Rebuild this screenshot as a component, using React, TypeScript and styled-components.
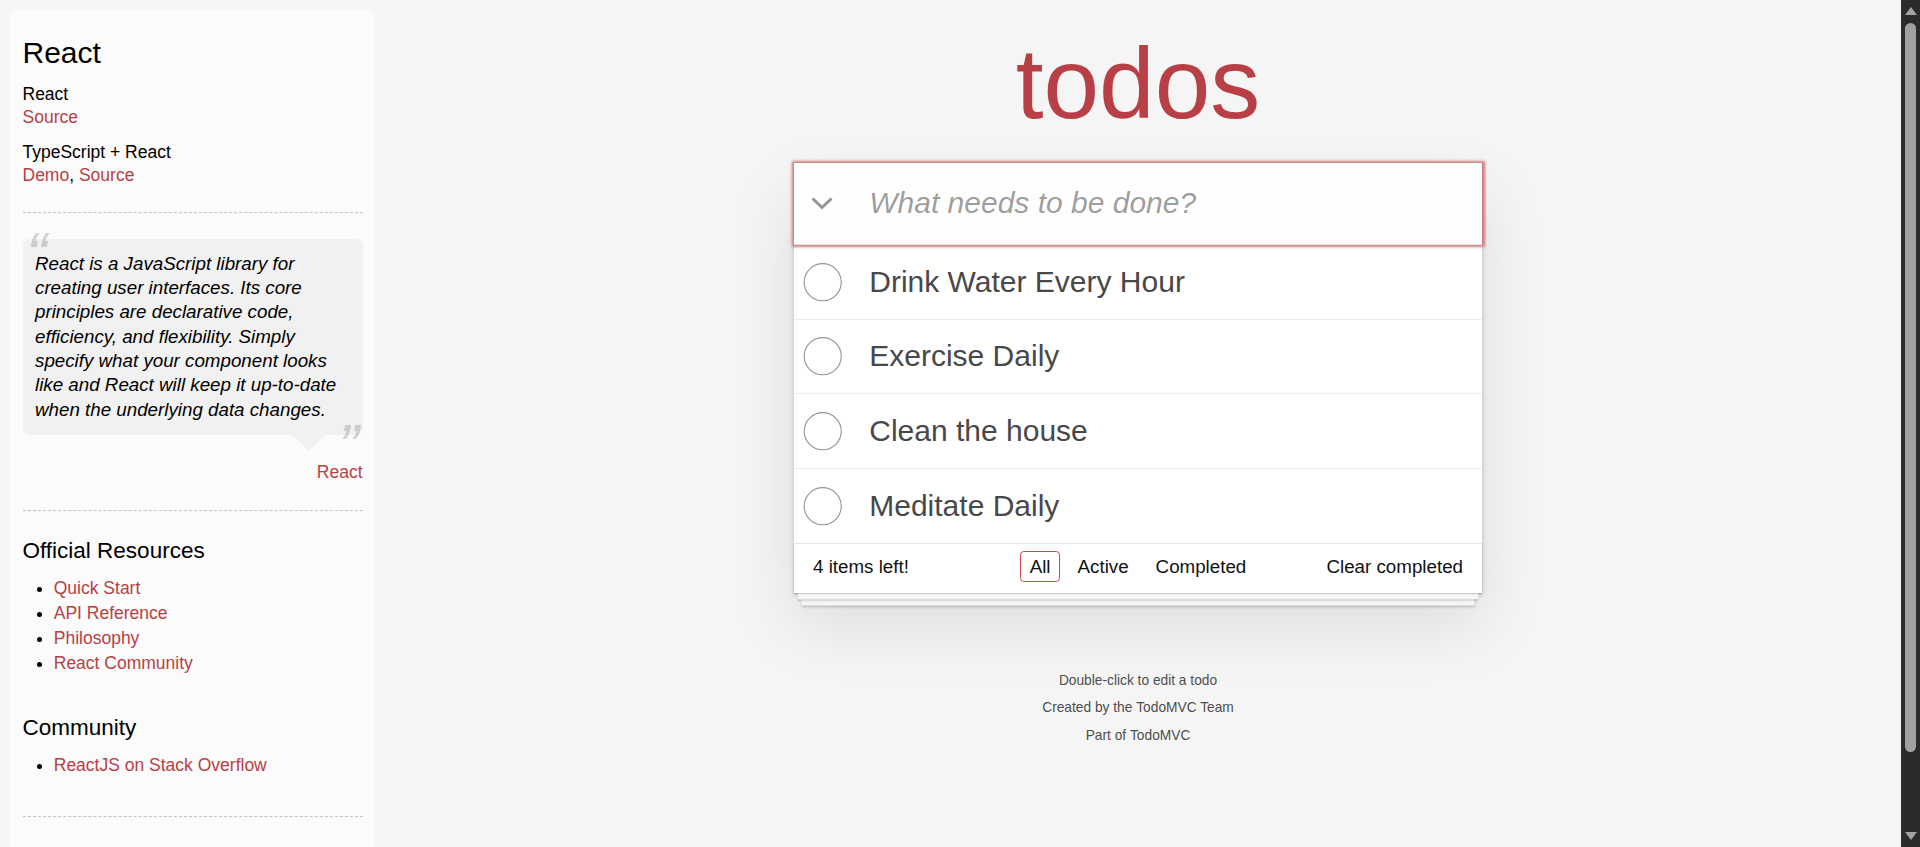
import React from "react";
import styled, { createGlobalStyle } from "styled-components";

const GlobalStyle = createGlobalStyle`
  html { scrollbar-width: none; }
  html::-webkit-scrollbar { display: none; }
  html, body { margin: 0; padding: 0; }
  body {
    background: #f5f5f5;
    color: #111111;
    font-family: "Liberation Sans", Arial, Helvetica, sans-serif;
    font-size: 17.5px;
    line-height: 24.5px;
    font-weight: 300;
  }
`;

const Page = styled.div`
  display: grid;
  grid-template-columns: 375px 1fr;
  align-items: start;
  padding-right: 19px;
`;

/* ---------- Window scrollbar (drawn, the browser hides its own) ---------- */

const ScrollBar = styled.div`
  position: fixed;
  top: 0;
  right: 0;
  bottom: 0;
  width: 19px;
  display: flex;
  flex-direction: column;
  background: #2b2b2b;
  z-index: 10;
`;

const ScrollButton = styled.div<{ $down?: boolean }>`
  flex: none;
  height: 19px;
  display: flex;
  justify-content: center;
  align-items: ${(p) => (p.$down ? "flex-start" : "flex-end")};
  padding: ${(p) => (p.$down ? "4px 0 0" : "0 0 4px")};
  box-sizing: border-box;

  &::before {
    content: "";
    border-left: 6px solid transparent;
    border-right: 6px solid transparent;
    ${(p) => (p.$down ? "border-top: 8px solid #a3a3a3;" : "border-bottom: 8px solid #a3a3a3;")}
  }
`;

const ScrollTrack = styled.div`
  flex: 1;
  padding: 4px 4px 0;
`;

const ScrollThumb = styled.div`
  height: 729px;
  border-radius: 6px;
  background: #a0a0a0;
`;

/* ---------- Learn sidebar ---------- */

const Sidebar = styled.aside`
  box-sizing: border-box;
  width: 365px;
  margin: 10px 0 0 10px;
  padding: 12.5px;
  border-radius: 6.25px;
  background: rgba(255, 255, 255, 0.6);
`;

const SideHeader = styled.header``;

const SideTitle = styled.h3`
  margin: 12.5px 0;
  font-size: 30px;
  line-height: 1.2;
  font-weight: 500;
  color: #000;
`;

const SourceName = styled.h5`
  margin: 12.5px 0 0;
  font-size: 17.5px;
  line-height: 1.2;
  font-weight: 500;
  color: #000;
`;

const LinkLine = styled.div`
  line-height: 24.5px;
  color: #000;
`;

const Link = styled.a`
  color: #b83f45;
  font-weight: normal;
  text-decoration: none;
`;

const Rule = styled.hr`
  margin: 25px 0;
  border: 0;
  border-top: 1px dashed #c5c5c5;
  border-bottom: 1px dashed #f7f7f7;
`;

const Quote = styled.blockquote`
  margin: 25px 0 0;
  padding: 0;
`;

const Bubble = styled.div`
  position: relative;
  padding: 12.5px;
  border-radius: 6.25px;
  background: rgba(0, 0, 0, 0.04);

  &::after {
    content: "";
    position: absolute;
    top: 100%;
    right: 37.5px;
    border: 16.25px solid transparent;
    border-top-color: rgba(0, 0, 0, 0.04);
  }
`;

const QuoteText = styled.p`
  margin: 0;
  font-size: 18.75px;
  line-height: 1.3;
  font-style: italic;
  color: #000;

  &::before {
    content: "\\201C";
    position: absolute;
    top: -25px;
    left: 3.75px;
    font-size: 62.5px;
    opacity: 0.15;
  }

  &::after {
    content: "\\201D";
    position: absolute;
    bottom: -52.5px;
    right: 3.75px;
    font-size: 62.5px;
    opacity: 0.15;
  }
`;

const Attribution = styled.footer`
  margin-top: 25.5px;
  line-height: 24.5px;
  text-align: right;
`;

const ResourceTitle = styled.h4`
  margin: 12.5px 0;
  font-size: 22.5px;
  line-height: 1.2;
  font-weight: 500;
  color: #000;
`;

const ResourceList = styled.ul`
  margin: 0 0 37.5px 31.25px;
  padding: 0;
  color: #000;
`;

const ResourceItem = styled.li`
  line-height: 25px;
`;

const SideFooter = styled.footer``;

const Note = styled.p`
  margin: 0;
  font-style: italic;
  color: #000;
`;

/* ---------- Todo app ---------- */

const Main = styled.main`
  display: flex;
  flex-direction: column;
  align-items: center;
`;

const Column = styled.div`
  width: 687.5px;
`;

const Title = styled.h1`
  margin: 33px 0 29.5px;
  height: 100px;
  font-size: 100px;
  line-height: 100px;
  font-weight: 200;
  text-align: center;
  color: #b83f45;
  text-rendering: optimizeLegibility;
`;

const Card = styled.section`
  background: #fff;
  box-shadow: 0 2.5px 5px 0 rgba(0, 0, 0, 0.2), 0 31.25px 62.5px 0 rgba(0, 0, 0, 0.1);
`;

const NewTodoRow = styled.header`
  display: flex;
  align-items: center;
  height: 81.25px;
  background: rgba(0, 0, 0, 0.003);
  box-shadow: 0 0 2.5px 2.5px #cf7d7d;
`;

const ToggleAll = styled.label`
  display: flex;
  align-items: center;
  justify-content: center;
  width: 56.25px;
  height: 100%;
  flex: none;
`;

const NewTodo = styled.input`
  flex: 1;
  min-width: 0;
  height: 100%;
  box-sizing: border-box;
  margin: 0;
  padding: 20px 20px 20px 18.75px;
  border: none;
  outline: none;
  background: transparent;
  font-family: inherit;
  font-size: 30px;
  line-height: 42px;
  color: inherit;
  caret-color: #000;

  &::placeholder {
    font-style: italic;
    font-weight: 400;
    color: rgba(0, 0, 0, 0.4);
  }
`;

const TodoList = styled.ul`
  margin: 0;
  padding: 0;
  list-style: none;
  border-top: 1px solid #e6e6e6;
`;

const TodoItem = styled.li`
  display: flex;
  align-items: center;
  font-size: 30px;
  border-bottom: 1px solid #ededed;

  &:last-child {
    border-bottom: none;
  }
`;

const Circle = styled.svg`
  flex: none;
  width: 50px;
  height: 50px;
`;

const TodoLabel = styled.label`
  flex: 1;
  padding: 18.875px 18.75px 18.875px 25px;
  line-height: 36px;
  font-weight: 400;
  color: #484848;
  word-break: break-all;
`;

const Footer = styled.footer`
  display: grid;
  grid-template-columns: 1fr auto 1fr;
  align-items: start;
  height: 25px;
  padding: 11.25px 18.75px 12.5px;
  font-size: 18.75px;
  line-height: 24.5px;
  border-top: 1px solid #e6e6e6;
  box-shadow: 0 1.25px 1.25px rgba(0, 0, 0, 0.2), 0 10px 0 -3.75px #f6f6f6,
    0 11.25px 1.25px -3.75px rgba(0, 0, 0, 0.2), 0 20px 0 -7.5px #f6f6f6,
    0 21.25px 2.5px -7.5px rgba(0, 0, 0, 0.2);
`;

const Count = styled.span`
  justify-self: start;
`;

const Filters = styled.ul`
  margin: 0;
  padding: 0;
  list-style: none;
  white-space: nowrap;
`;

const FilterItem = styled.li`
  display: inline;
`;

const FilterLink = styled.a<{ $selected?: boolean }>`
  margin: 3.75px;
  padding: 3.75px 8.75px;
  color: inherit;
  text-decoration: none;
  border: 1px solid ${(p) => (p.$selected ? "#ce4646" : "transparent")};
  border-radius: 3.75px;
`;

const ClearButton = styled.button`
  justify-self: end;
  margin: 0;
  padding: 0;
  border: 0;
  background: none;
  font-family: inherit;
  font-size: 18.75px;
  font-weight: inherit;
  line-height: 23.75px;
  color: inherit;
  cursor: pointer;
`;

const Info = styled.footer`
  margin: 81.25px auto 0;
  color: #4d4d4d;
  font-size: 13.75px;
  text-shadow: 0 1.25px 0 rgba(255, 255, 255, 0.5);
  text-align: center;
`;

const InfoLine = styled.p`
  margin: 13.75px 0;
  line-height: 1;
`;

const InfoLink = styled.a`
  color: inherit;
  text-decoration: none;
  font-weight: 400;
`;

const todos = ["Drink Water Every Hour", "Exercise Daily", "Clean the house", "Meditate Daily"];

const Chevron = () => (
  <svg width="22" height="13" viewBox="0 0 22 13" aria-hidden="true">
    <polyline points="1.5,1.5 11,10.5 20.5,1.5" fill="none" stroke="#949494" strokeWidth="3" />
  </svg>
);

const ToggleCircle = () => (
  <Circle viewBox="-10 -18 100 135" aria-hidden="true">
    <circle cx="50" cy="50" r="50" fill="none" stroke="#949494" strokeWidth="3" />
  </Circle>
);

export default function App() {
  return (
    <>
      <GlobalStyle />
      <Page>
        <Sidebar>
          <SideHeader>
            <SideTitle>React</SideTitle>
            <SourceName>React</SourceName>
            <LinkLine>
              <Link href="#">Source</Link>
            </LinkLine>
            <SourceName>TypeScript + React</SourceName>
            <LinkLine>
              <Link href="#">Demo</Link>, <Link href="#">Source</Link>
            </LinkLine>
          </SideHeader>
          <Rule />
          <Quote>
            <Bubble>
              <QuoteText>
                React is a JavaScript library for creating user interfaces. Its core principles are
                declarative code, efficiency, and flexibility. Simply specify what your component
                looks like and React will keep it up-to-date when the underlying data changes.
              </QuoteText>
            </Bubble>
            <Attribution>
              <Link href="#">React</Link>
            </Attribution>
          </Quote>
          <Rule />
          <ResourceTitle>Official Resources</ResourceTitle>
          <ResourceList>
            <ResourceItem><Link href="#">Quick Start</Link></ResourceItem>
            <ResourceItem><Link href="#">API Reference</Link></ResourceItem>
            <ResourceItem><Link href="#">Philosophy</Link></ResourceItem>
            <ResourceItem><Link href="#">React Community</Link></ResourceItem>
          </ResourceList>
          <ResourceTitle>Community</ResourceTitle>
          <ResourceList>
            <ResourceItem><Link href="#">ReactJS on Stack Overflow</Link></ResourceItem>
          </ResourceList>
          <SideFooter>
            <Rule />
            <Note>
              If you have other helpful links to share, or find any of the links above no longer
              work, please <Link href="#">let us know</Link>.
            </Note>
          </SideFooter>
        </Sidebar>

        <Main>
          <Column>
            <Title>todos</Title>
            <Card>
              <NewTodoRow>
                <ToggleAll htmlFor="new-todo">
                  <Chevron />
                </ToggleAll>
                <NewTodo id="new-todo" placeholder="What needs to be done?" autoFocus />
              </NewTodoRow>
              <TodoList>
                {todos.map((t) => (
                  <TodoItem key={t}>
                    <ToggleCircle />
                    <TodoLabel>{t}</TodoLabel>
                  </TodoItem>
                ))}
              </TodoList>
              <Footer>
                <Count>4 items left!</Count>
                <Filters>
                  <FilterItem><FilterLink href="#/" $selected>All</FilterLink></FilterItem>
                  <FilterItem><FilterLink href="#/active">Active</FilterLink></FilterItem>
                  <FilterItem><FilterLink href="#/completed">Completed</FilterLink></FilterItem>
                </Filters>
                <ClearButton>Clear completed</ClearButton>
              </Footer>
            </Card>
            <Info>
              <InfoLine>Double-click to edit a todo</InfoLine>
              <InfoLine>
                Created by the <InfoLink href="#">TodoMVC Team</InfoLink>
              </InfoLine>
              <InfoLine>
                Part of <InfoLink href="#">TodoMVC</InfoLink>
              </InfoLine>
            </Info>
          </Column>
        </Main>
      </Page>
      <ScrollBar aria-hidden="true">
        <ScrollButton />
        <ScrollTrack>
          <ScrollThumb />
        </ScrollTrack>
        <ScrollButton $down />
      </ScrollBar>
    </>
  );
}
